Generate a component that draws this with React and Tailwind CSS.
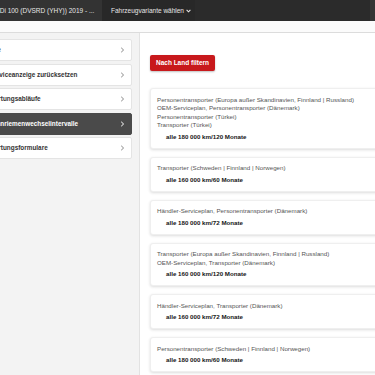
import React from "react";

const sideItems = [
  { label: "Alle", active: false },
  { label: "Serviceanzeige zurücksetzen", active: false },
  { label: "Wartungsabläufe", active: false },
  { label: "Zahnriemenwechselintervalle", active: true },
  { label: "Wartungsformulare", active: false },
];

const cards = [
  {
    lines: [
      "Personentransporter (Europa außer Skandinavien, Finnland | Russland)",
      "OEM-Serviceplan, Personentransporter (Dänemark)",
      "Personentransporter (Türkei)",
      "Transporter (Türkei)",
    ],
    interval: "alle 180 000 km/120 Monate",
  },
  { lines: ["Transporter (Schweden | Finnland | Norwegen)"], interval: "alle 160 000 km/60 Monate" },
  { lines: ["Händler-Serviceplan, Personentransporter (Dänemark)"], interval: "alle 180 000 km/72 Monate" },
  {
    lines: [
      "Transporter (Europa außer Skandinavien, Finnland | Russland)",
      "OEM-Serviceplan, Transporter (Dänemark)",
    ],
    interval: "alle 160 000 km/120 Monate",
  },
  { lines: ["Händler-Serviceplan, Transporter (Dänemark)"], interval: "alle 160 000 km/72 Monate" },
  { lines: ["Personentransporter (Schweden | Finnland | Norwegen)"], interval: "alle 180 000 km/60 Monate" },
];

function Chevron({ color }) {
  return (
    <svg width="5" height="6" viewBox="0 0 5 6" className="shrink-0">
      <path d="M1.2 0.8 L3.6 3 L1.2 5.2" fill="none" stroke={color} strokeWidth="1" />
    </svg>
  );
}

export default function App() {
  return (
    <div
      className="w-[375px] h-[375px] overflow-hidden bg-[#f3f3f3]"
      style={{ fontFamily: '"Liberation Sans", Arial, sans-serif' }}
    >
      {/* top dark bar */}
      <div className="h-[21px] flex bg-[#2b2b2b] text-[#e6e6e6] text-[6.5px]">
        <div className="w-[102px] shrink-0 bg-[#333333] flex items-center overflow-hidden">
          <span className="whitespace-nowrap -ml-[5px]">HDi 100 (DVSRD (YHY)) 2019 - ...</span>
        </div>
        <div className="w-[93px] shrink-0 bg-[#282828] flex items-center pl-[9px] gap-[2px]">
          <span className="whitespace-nowrap">Fahrzeugvariante wählen</span>
          <svg width="5" height="4" viewBox="0 0 5 4">
            <path d="M0.6 0.8 L2.5 2.8 L4.4 0.8" fill="none" stroke="#e6e6e6" strokeWidth="1.1" />
          </svg>
        </div>
        <div className="flex-1" />
        <div className="w-[5px] bg-[#353535]" />
      </div>
      {/* light strip */}
      <div className="h-[12px] bg-[#fbfbfb] border-b border-[#dcdcdc]" />
      {/* body */}
      <div className="flex h-[342px]">
        {/* sidebar */}
        <div className="w-[140px] shrink-0 overflow-hidden border-r border-[#e2e2e2] bg-[#f3f3f3]">
          <div className="-ml-[21px] w-[153px] pt-[6px] flex flex-col gap-[2.5px]">
            {sideItems.map((it) => (
              <div
                key={it.label}
                className={
                  "h-[22px] flex items-center justify-between pl-[9px] pr-[6px] rounded-[2px] border text-[6.4px] font-bold " +
                  (it.active
                    ? "bg-[#4a4a4a] border-[#4a4a4a] text-white"
                    : "bg-white border-[#e4e4e4] text-[#333333]")
                }
              >
                <span className="whitespace-nowrap">{it.label}</span>
                <Chevron color={it.active ? "#ffffff" : "#888888"} />
              </div>
            ))}
          </div>
        </div>
        {/* main panel */}
        <div className="flex-1 bg-white pl-[10px] pt-[22px] overflow-hidden">
          <div className="w-[65px] h-[16px] rounded-[2px] bg-[#c8191c] shadow-[0_1px_2px_rgba(0,0,0,0.25)] flex items-center justify-center text-white text-[6.5px] font-bold">
            Nach Land filtern
          </div>
          <div className="mt-[17px] w-[240px] flex flex-col gap-[8px]">
            {cards.map((c, i) => (
              <div
                key={i}
                className="bg-white rounded-[3px] border border-[#efefef] shadow-[0_1px_3px_rgba(0,0,0,0.14)] px-[6px] py-[6.5px] text-[6.2px] leading-[8.5px]"
              >
                {c.lines.map((l) => (
                  <div key={l} className="text-[#555555] whitespace-nowrap">
                    {l}
                  </div>
                ))}
                <div className="mt-[3px] pl-[9px] font-bold text-[#151515] whitespace-nowrap">{c.interval}</div>
              </div>
            ))}
          </div>
        </div>
      </div>
    </div>
  );
}
